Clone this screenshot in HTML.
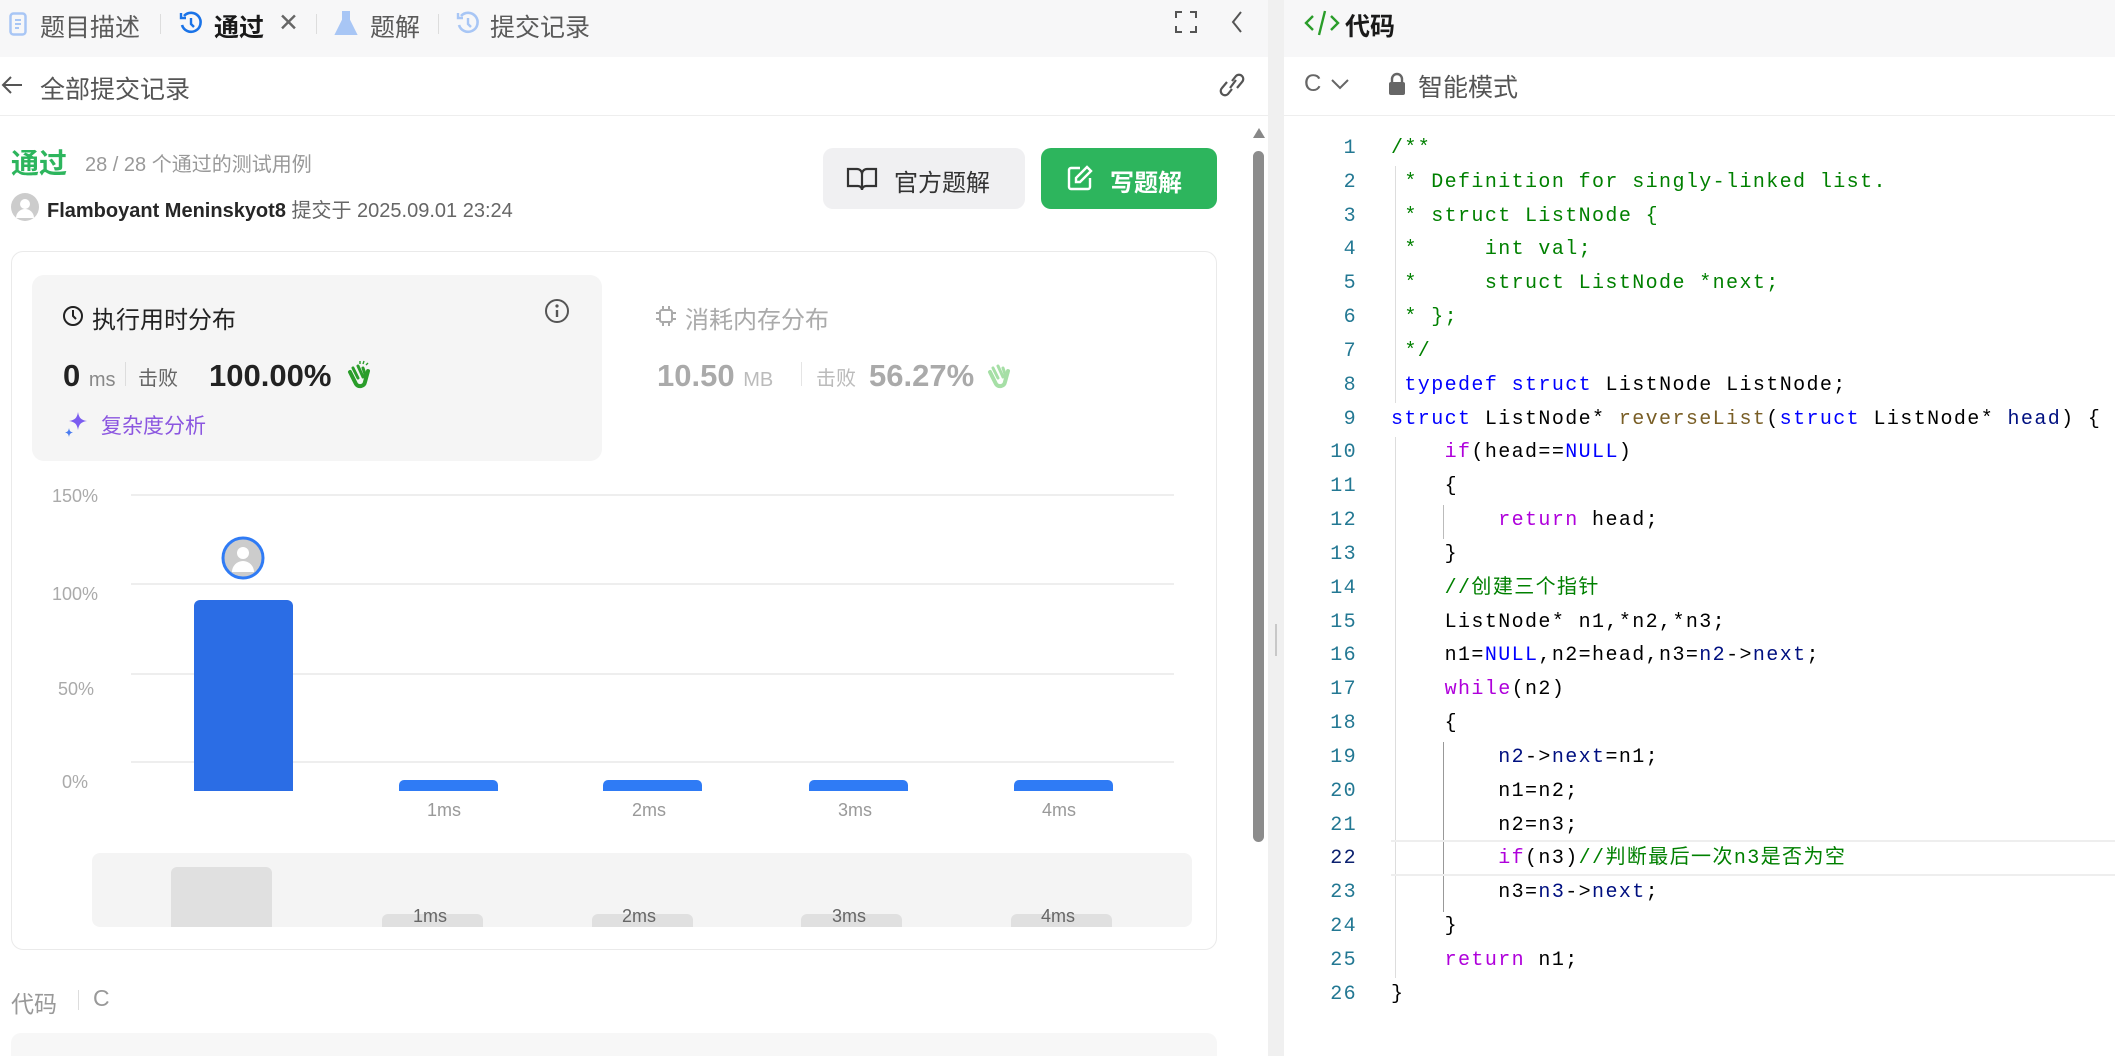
<!DOCTYPE html>
<html style="overflow:hidden"><head><meta charset="utf-8"><style>
*{margin:0;padding:0;box-sizing:border-box}
body{width:2115px;height:1056px;overflow:hidden;background:#f0f0f0;font-family:"Liberation Sans","Noto Sans CJK SC",sans-serif;position:relative;color:#262626}
.a{position:absolute;white-space:nowrap}
.code{font-family:"Liberation Mono","Noto Sans CJK SC",monospace;font-size:20px;letter-spacing:1.4px}
.ln{position:absolute;left:0;width:1357px;text-align:right;color:#237893;font-family:"Liberation Mono",monospace;font-size:20px}
pre.a{white-space:pre}
.c{color:#008000}.k{color:#0000ff}.p{color:#af00db}.f{color:#795e26}.v{color:#001080}
</style></head><body>
<div class="a" style="left:0;top:0;width:1268px;height:1056px;background:#fff"></div>
<div class="a" style="left:0;top:0;width:1268px;height:57px;background:#f7f7f8"></div>
<div class="a" style="left:1284px;top:0;width:831px;height:1056px;background:#fff"></div>
<div class="a" style="left:1284px;top:0;width:831px;height:57px;background:#f7f7f8"></div>

<svg class="a" style="left:9px;top:12px" width="18" height="24" viewBox="0 0 18 24"><rect x="1.5" y="1.5" width="15" height="21" rx="3" fill="none" stroke="#a8c6f5" stroke-width="2.5"/><path d="M6 8h6M6 12h6M6 16h4" stroke="#a8c6f5" stroke-width="2"/></svg>
<div class="a" style="left:40px;top:8px;font-size:25px;color:#5a5a5a">题目描述</div>
<div class="a" style="left:160px;top:14px;width:1px;height:20px;background:#ddd"></div>
<svg class="a" style="left:178px;top:10px" width="26" height="26" viewBox="0 0 26 26"><path d="M6 6 A9.5 9.5 0 1 1 4 15" fill="none" stroke="#1a73e8" stroke-width="2.6"/><path d="M3 3v5h5" fill="none" stroke="#1a73e8" stroke-width="2.4"/><path d="M13 8v6l3 3" fill="none" stroke="#1a73e8" stroke-width="2.4"/></svg>
<div class="a" style="left:214px;top:8px;font-size:25px;color:#1a1a1a;font-weight:bold">通过</div>
<div class="a" style="left:278px;top:8px;font-size:25px;color:#666">✕</div>
<div class="a" style="left:316px;top:14px;width:1px;height:20px;background:#ddd"></div>
<svg class="a" style="left:334px;top:10px" width="24" height="27" viewBox="0 0 24 27"><path d="M8 2h8M9 2v8L2 24h20L15 10V2" fill="#a8c6f5" stroke="#a8c6f5" stroke-width="2"/></svg>
<div class="a" style="left:370px;top:8px;font-size:25px;color:#5a5a5a">题解</div>
<div class="a" style="left:438px;top:14px;width:1px;height:20px;background:#ddd"></div>
<svg class="a" style="left:455px;top:10px" width="26" height="26" viewBox="0 0 26 26"><path d="M6 6 A9.5 9.5 0 1 1 4 15" fill="none" stroke="#a8c6f5" stroke-width="2.6"/><path d="M3 3v5h5" fill="none" stroke="#a8c6f5" stroke-width="2.4"/><path d="M13 8v6l3 3" fill="none" stroke="#a8c6f5" stroke-width="2.4"/></svg>
<div class="a" style="left:490px;top:8px;font-size:25px;color:#5a5a5a">提交记录</div>
<svg class="a" style="left:1174px;top:10px" width="24" height="24" viewBox="0 0 24 24"><path d="M2 8V2h6M16 2h6v6M22 16v6h-6M8 22H2v-6" fill="none" stroke="#555" stroke-width="2"/></svg>
<svg class="a" style="left:1230px;top:10px" width="14" height="24" viewBox="0 0 14 24"><path d="M11 2L3 12l8 10" fill="none" stroke="#555" stroke-width="2"/></svg>

<svg class="a" style="left:0;top:74px" width="24" height="22" viewBox="0 0 24 22"><path d="M22 11H3M11 3l-8 8 8 8" fill="none" stroke="#555" stroke-width="2"/></svg>
<div class="a" style="left:40px;top:70px;font-size:25px;color:#555">全部提交记录</div>
<svg class="a" style="left:1216px;top:70px" width="32" height="30" viewBox="0 0 32 30"><path d="M14 18l6-8M11 12l-5 6a4 4 0 0 0 6 6l4-5M21 18l5-6a4 4 0 0 0-6-6l-4 5" fill="none" stroke="#555" stroke-width="2.2"/></svg>
<div class="a" style="left:0;top:115px;width:1268px;height:1px;background:#eee"></div>

<div class="a" style="left:1253px;top:128px;width:0;height:0;border-left:6px solid transparent;border-right:6px solid transparent;border-bottom:10px solid #888"></div>
<div class="a" style="left:1253px;top:151px;width:11px;height:691px;background:#8c8c8c;border-radius:6px"></div>

<div class="a" style="left:11px;top:142px;font-size:28px;color:#2db55d;font-weight:bold">通过</div>
<div class="a" style="left:85px;top:148px;font-size:20px;color:#999">28 / 28 个通过的测试用例</div>
<svg class="a" style="left:10px;top:192px" width="30" height="30" viewBox="0 0 30 30"><circle cx="15" cy="15" r="14" fill="#ccc"/><circle cx="15" cy="12" r="5" fill="#fff"/><path d="M6 26a9 9 0 0 1 18 0z" fill="#fff"/></svg>
<div class="a" style="left:47px;top:194px;font-size:20px;color:#262626;font-weight:bold">Flamboyant Meninskyot8 <span style="font-weight:normal;color:#666">提交于 2025.09.01 23:24</span></div>
<div class="a" style="left:823px;top:148px;width:202px;height:61px;background:#f0f0f2;border-radius:10px"></div>
<svg class="a" style="left:846px;top:166px" width="32" height="26" viewBox="0 0 32 26"><path d="M2 3h9a5 5 0 0 1 5 5v16a4 4 0 0 0-4-4H2zM30 3h-9a5 5 0 0 0-5 5v16a4 4 0 0 1 4-4h10z" fill="none" stroke="#333" stroke-width="2.2"/></svg>
<div class="a" style="left:894px;top:163px;font-size:24px;color:#333">官方题解</div>
<div class="a" style="left:1041px;top:148px;width:176px;height:61px;background:#2db55d;border-radius:10px"></div>
<svg class="a" style="left:1066px;top:164px" width="28" height="28" viewBox="0 0 28 28"><path d="M14 4H5a2 2 0 0 0-2 2v17a2 2 0 0 0 2 2h17a2 2 0 0 0 2-2v-9" fill="none" stroke="#fff" stroke-width="2.4"/><path d="M21 3l4 4-11 11h-4v-4z" fill="none" stroke="#fff" stroke-width="2.4"/></svg>
<div class="a" style="left:1110px;top:163px;font-size:24px;color:#fff;font-weight:bold">写题解</div>

<div class="a" style="left:11px;top:251px;width:1206px;height:699px;border:1px solid #eaeaea;border-radius:12px;background:#fff"></div>
<div class="a" style="left:32px;top:275px;width:570px;height:186px;background:#f5f5f5;border-radius:12px"></div>
<svg class="a" style="left:62px;top:305px" width="22" height="22" viewBox="0 0 22 22"><circle cx="11" cy="11" r="9" fill="none" stroke="#222" stroke-width="2"/><path d="M11 5v6l3 3" fill="none" stroke="#222" stroke-width="2"/></svg>
<div class="a" style="left:92px;top:300px;font-size:24px;color:#222">执行用时分布</div>
<svg class="a" style="left:544px;top:298px" width="26" height="26" viewBox="0 0 26 26"><circle cx="13" cy="13" r="11" fill="none" stroke="#555" stroke-width="2"/><circle cx="13" cy="8" r="1.6" fill="#555"/><path d="M13 12v7" stroke="#555" stroke-width="2.4"/></svg>
<div class="a" style="left:63px;top:358px;font-size:31px;color:#222;font-weight:bold">0 <span style="font-size:20px;color:#888;font-weight:normal">ms</span></div>
<div class="a" style="left:125px;top:362px;width:1px;height:24px;background:#ddd"></div>
<div class="a" style="left:138px;top:362px;font-size:20px;color:#666">击败</div>
<div class="a" style="left:209px;top:358px;font-size:31px;color:#222;font-weight:bold">100.00%</div>
<svg class="a" style="left:346px;top:360px" width="26" height="30" viewBox="0 0 26 30"><path d="M4 12l6 12a5 5 0 0 0 9-2l3-11" fill="none" stroke="#2a9d2a" stroke-width="4" stroke-linecap="round"/><path d="M7 8l5 10M12 6l5 11M17 8l3 9" stroke="#2a9d2a" stroke-width="3" stroke-linecap="round"/><path d="M14 1v3M18 1l-1 3M22 3l-2 2" stroke="#2a9d2a" stroke-width="1.4"/></svg>
<svg class="a" style="left:64px;top:410px" width="26" height="28" viewBox="0 0 26 28"><path d="M14 2c1 6 3 8 9 9-6 1-8 3-9 9-1-6-3-8-9-9 6-1 8-3 9-9z" fill="#7b5cf0"/><path d="M5 18c.5 3 1.5 4 4 4.5-2.5.5-3.5 1.5-4 4.5-.5-3-1.5-4-4-4.5 2.5-.5 3.5-1.5 4-4.5z" fill="#4a7cf0"/></svg>
<div class="a" style="left:101px;top:410px;font-size:21px;color:#8b56e0">复杂度分析</div>

<svg class="a" style="left:655px;top:305px" width="22" height="22" viewBox="0 0 22 22"><rect x="5" y="5" width="12" height="12" rx="2" fill="none" stroke="#aaa" stroke-width="2"/><path d="M8 1v4M14 1v4M8 17v4M14 17v4M1 8h4M1 14h4M17 8h4M17 14h4" stroke="#aaa" stroke-width="2"/></svg>
<div class="a" style="left:685px;top:300px;font-size:24px;color:#aaa">消耗内存分布</div>
<div class="a" style="left:657px;top:358px;font-size:31px;color:#aaa;font-weight:bold">10.50 <span style="font-size:20px;color:#bbb;font-weight:normal">MB</span></div>
<div class="a" style="left:801px;top:362px;width:1px;height:24px;background:#e5e5e5"></div>
<div class="a" style="left:816px;top:362px;font-size:20px;color:#bbb">击败</div>
<div class="a" style="left:869px;top:358px;font-size:31px;color:#aaa;font-weight:bold">56.27%</div>
<svg class="a" style="left:986px;top:360px" width="26" height="30" viewBox="0 0 26 30"><path d="M4 12l6 12a5 5 0 0 0 9-2l3-11" fill="none" stroke="#a6dfa6" stroke-width="4" stroke-linecap="round"/><path d="M7 8l5 10M12 6l5 11M17 8l3 9" stroke="#a6dfa6" stroke-width="3" stroke-linecap="round"/></svg>

<div class="a" style="left:131px;top:494px;width:1043px;height:2px;background:#eee"></div>
<div class="a" style="left:131px;top:583px;width:1043px;height:2px;background:#eee"></div>
<div class="a" style="left:131px;top:673px;width:1043px;height:2px;background:#eee"></div>
<div class="a" style="left:131px;top:761px;width:1043px;height:2px;background:#eee"></div>
<div class="a" style="left:52px;top:486px;font-size:18px;color:#aaa">150%</div>
<div class="a" style="left:52px;top:584px;font-size:18px;color:#aaa">100%</div>
<div class="a" style="left:58px;top:679px;font-size:18px;color:#aaa">50%</div>
<div class="a" style="left:62px;top:772px;font-size:18px;color:#aaa">0%</div>
<div class="a" style="left:194px;top:600px;width:99px;height:191px;background:#2b6de5;border-radius:6px 6px 0 0"></div>
<div class="a" style="left:399px;top:780px;width:99px;height:11px;background:#2f7bf5;border-radius:5px 5px 0 0"></div>
<div class="a" style="left:603px;top:780px;width:99px;height:11px;background:#2f7bf5;border-radius:5px 5px 0 0"></div>
<div class="a" style="left:809px;top:780px;width:99px;height:11px;background:#2f7bf5;border-radius:5px 5px 0 0"></div>
<div class="a" style="left:1014px;top:780px;width:99px;height:11px;background:#2f7bf5;border-radius:5px 5px 0 0"></div>
<div class="a" style="left:427px;top:800px;font-size:18px;color:#999">1ms</div>
<div class="a" style="left:632px;top:800px;font-size:18px;color:#999">2ms</div>
<div class="a" style="left:838px;top:800px;font-size:18px;color:#999">3ms</div>
<div class="a" style="left:1042px;top:800px;font-size:18px;color:#999">4ms</div>
<svg class="a" style="left:221px;top:536px" width="44" height="44" viewBox="0 0 44 44"><circle cx="22" cy="22" r="20" fill="#ccc" stroke="#2f7bf5" stroke-width="3"/><circle cx="22" cy="17" r="6" fill="#fff"/><path d="M11 36a11 11 0 0 1 22 0z" fill="#fff"/></svg>

<div class="a" style="left:92px;top:853px;width:1100px;height:74px;background:#f4f4f4;border-radius:8px"></div>
<div class="a" style="left:171px;top:867px;width:101px;height:60px;background:#e0e0e0;border-radius:6px 6px 0 0"></div>
<div class="a" style="left:382px;top:914px;width:101px;height:13px;background:#e0e0e0;border-radius:6px 6px 0 0"></div>
<div class="a" style="left:592px;top:914px;width:101px;height:13px;background:#e0e0e0;border-radius:6px 6px 0 0"></div>
<div class="a" style="left:801px;top:914px;width:101px;height:13px;background:#e0e0e0;border-radius:6px 6px 0 0"></div>
<div class="a" style="left:1011px;top:914px;width:101px;height:13px;background:#e0e0e0;border-radius:6px 6px 0 0"></div>
<div class="a" style="left:413px;top:906px;font-size:18px;color:#666">1ms</div>
<div class="a" style="left:622px;top:906px;font-size:18px;color:#666">2ms</div>
<div class="a" style="left:832px;top:906px;font-size:18px;color:#666">3ms</div>
<div class="a" style="left:1041px;top:906px;font-size:18px;color:#666">4ms</div>

<div class="a" style="left:11px;top:985px;font-size:23px;color:#999">代码</div>
<div class="a" style="left:78px;top:990px;width:1px;height:20px;background:#ddd"></div>
<div class="a" style="left:93px;top:985px;font-size:23px;color:#999">C</div>
<div class="a" style="left:11px;top:1033px;width:1206px;height:40px;background:#f7f7f7;border-radius:10px"></div>

<div class="a" style="left:1275px;top:624px;width:2px;height:32px;background:#c8c8c8"></div>

<svg class="a" style="left:1304px;top:9px" width="36" height="28" viewBox="0 0 36 28"><path d="M9 7l-7 7 7 7M27 7l7 7-7 7M21 2l-6 24" fill="none" stroke="#2a9d2a" stroke-width="2.4"/></svg>
<div class="a" style="left:1345px;top:7px;font-size:25px;color:#1a1a1a;font-weight:bold">代码</div>
<div class="a" style="left:1304px;top:70px;font-size:24px;color:#666">C</div>
<svg class="a" style="left:1330px;top:77px" width="20" height="14" viewBox="0 0 20 14"><path d="M2 3l8 8 8-8" fill="none" stroke="#666" stroke-width="2"/></svg>
<svg class="a" style="left:1388px;top:72px" width="18" height="24" viewBox="0 0 18 24"><path d="M4 10V7a5 5 0 0 1 10 0v3" fill="none" stroke="#666" stroke-width="2.4"/><rect x="1" y="10" width="16" height="13" rx="2" fill="#666"/></svg>
<div class="a" style="left:1418px;top:68px;font-size:25px;color:#555">智能模式</div>
<div class="a" style="left:1284px;top:115px;width:831px;height:1px;background:#eee"></div>

<div class="a" style="left:1395px;top:166px;width:1px;height:237px;background:#ddd"></div>
<div class="a" style="left:1395px;top:437px;width:1px;height:541px;background:#ddd"></div>
<div class="a" style="left:1443px;top:505px;width:1px;height:34px;background:#bbb"></div>
<div class="a" style="left:1443px;top:742px;width:1px;height:170px;background:#999"></div>
<div class="a" style="left:1391px;top:840px;width:724px;height:36px;border-top:2px solid #eee;border-bottom:2px solid #eee"></div>

<div class="code">
<div class="ln" style="top:132px;line-height:33.83px">1<br>2<br>3<br>4<br>5<br>6<br>7<br>8<br>9<br>10<br>11<br>12<br>13<br>14<br>15<br>16<br>17<br>18<br>19<br>20<br>21<br><span style="color:#0b216f">22</span><br>23<br>24<br>25<br>26</div>
<pre class="a code" style="left:1391px;top:132px;line-height:33.83px;color:#000"><span class="c">/**
 * Definition for singly-linked list.
 * struct ListNode {
 *     int val;
 *     struct ListNode *next;
 * };
 */</span>
 <span class="k">typedef</span> <span class="k">struct</span> ListNode ListNode;
<span class="k">struct</span> ListNode* <span class="f">reverseList</span>(<span class="k">struct</span> ListNode* <span class="v">head</span>) {
    <span class="p">if</span>(head==<span class="k">NULL</span>)
    {
        <span class="p">return</span> head;
    }
    <span class="c">//创建三个指针</span>
    ListNode* n1,*n2,*n3;
    n1=<span class="k">NULL</span>,n2=head,n3=<span class="v">n2</span>-&gt;<span class="v">next</span>;
    <span class="p">while</span>(n2)
    {
        <span class="v">n2</span>-&gt;<span class="v">next</span>=n1;
        n1=n2;
        n2=n3;
        <span class="p">if</span>(n3)<span class="c">//判断最后一次n3是否为空</span>
        n3=<span class="v">n3</span>-&gt;<span class="v">next</span>;
    }
    <span class="p">return</span> n1;
}</pre>
</div>
</body></html>
